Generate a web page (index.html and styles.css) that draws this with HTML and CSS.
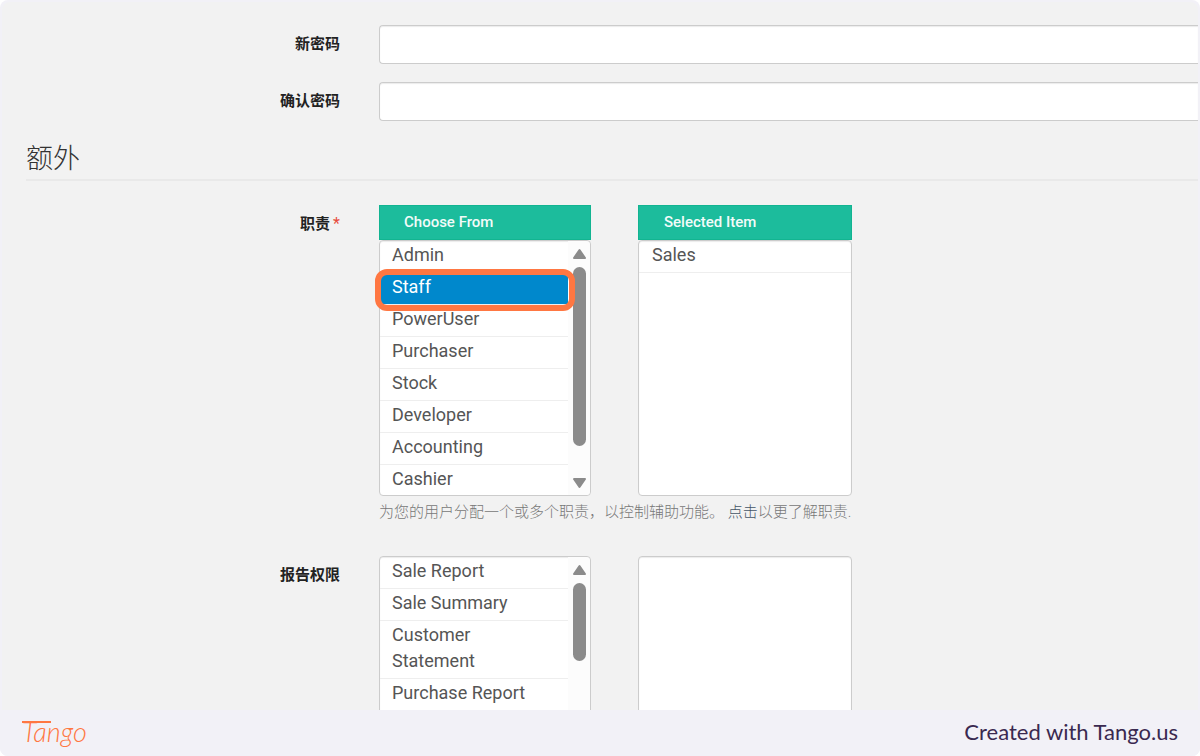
FILE: index.html
```html
<!DOCTYPE html>
<html lang="zh-CN">
<head>
    <meta charset="UTF-8">
    <meta name="viewport" content="width=device-width, initial-scale=1.0">
    <title>额外</title>
    <link rel="stylesheet" href="styles.css">
</head>
<body>
    <div class="page">
        <main class="panel">
            <form class="form">
                <div class="row">
                    <label class="row-label" for="password">新密码</label>
                    <input class="text-input" type="password" id="password">
                </div>
                <div class="row">
                    <label class="row-label" for="confirm">确认密码</label>
                    <input class="text-input" type="password" id="confirm">
                </div>

                <h2 class="section-title">额外</h2>

                <div class="row">
                    <label class="row-label" for="roles">职责<span class="required">*</span></label>
                    <div>
                        <div class="picker">
                            <div class="picker-col">
                                <label class="picker-head" for="roles">Choose From</label>
                                <div class="list-box">
                                    <select class="list" id="roles" multiple>
                                        <option>Admin</option>
                                        <option selected>Staff</option>
                                        <option>PowerUser</option>
                                        <option>Purchaser</option>
                                        <option>Stock</option>
                                        <option>Developer</option>
                                        <option>Accounting</option>
                                        <option>Cashier</option>
                                    </select>
                                    <div class="scrollbar">
                                        <svg class="arrow" viewBox="0 0 15 12"><path d="M7.5 2L13 10H2Z"/></svg>
                                        <span class="thumb"></span>
                                        <svg class="arrow" viewBox="0 0 15 12"><path d="M2 2H13L7.5 10Z"/></svg>
                                    </div>
                                    <div class="highlight"></div>
                                </div>
                            </div>
                            <div class="picker-col picker-selected">
                                <label class="picker-head" for="roles-selected">Selected Item</label>
                                <div class="list-box">
                                    <select class="list" id="roles-selected" multiple>
                                        <option>Sales</option>
                                    </select>
                                </div>
                            </div>
                        </div>
                        <p class="help">为您的用户分配一个或多个职责，以控制辅助功能。 <a href="#">点击</a>以更了解职责.</p>
                    </div>
                </div>

                <div class="row">
                    <label class="row-label" for="reports">报告权限</label>
                    <div class="picker">
                        <div class="picker-col">
                            <div class="list-box">
                                <select class="list" id="reports" multiple>
                                    <option>Sale Report</option>
                                    <option>Sale Summary</option>
                                    <option>Customer Statement</option>
                                    <option>Purchase Report</option>
                                </select>
                                <div class="scrollbar">
                                    <svg class="arrow" viewBox="0 0 15 12"><path d="M7.5 2L13 10H2Z"/></svg>
                                    <span class="thumb thumb-short"></span>
                                    <svg class="arrow" viewBox="0 0 15 12"><path d="M2 2H13L7.5 10Z"/></svg>
                                </div>
                            </div>
                        </div>
                        <div class="picker-col picker-selected">
                            <div class="list-box">
                                <select class="list" id="reports-selected" multiple></select>
                            </div>
                        </div>
                    </div>
                </div>
            </form>
        </main>

        <footer class="footer">
            <span class="logo">Tango</span>
            <span class="credit">Created with Tango.us</span>
        </footer>
    </div>
</body>
</html>
```

FILE: styles.css
```css
* {
    box-sizing: border-box;
}
body {
    margin: 0;
    background: white;
    font-family: Roboto, "Noto Sans CJK SC", sans-serif;
    color: #555;
}
.page {
    display: flex;
    flex-direction: column;
    height: 100vh;
    background: #f2f1f7;
    border-radius: 8px;
    overflow: hidden;
}
.panel {
    flex: 1;
    min-height: 0;
    margin: 2px 2px 0;
    background: #f2f2f2;
    border-radius: 8px 8px 0 0;
    overflow: hidden;
}
.form {
    padding: 23px 0 0 24px;
}
.row {
    display: grid;
    grid-template-columns: 314px 1fr;
    column-gap: 39px;
    margin-bottom: 18px;
}
.row-label {
    padding-top: 8px;
    font-size: 15px;
    line-height: 22px;
    font-weight: bold;
    color: #222;
    text-align: right;
}
.required {
    margin-left: 3px;
    font-size: 16px;
    font-weight: normal;
    color: #e74c3c;
}
.text-input {
    width: 100%;
    height: 39px;
    padding: 4px 12px;
    border: 1px solid #ccc;
    border-right: none;
    border-radius: 4px 0 0 4px;
    background: white;
    box-shadow: inset 0 1px 1px rgba(0,0,0,0.08);
    font-size: 18px;
}
.section-title {
    margin: 0 0 24px;
    padding-bottom: 5px;
    border-bottom: 2px solid #e9e9e9;
    font-family: "Noto Sans CJK SC", sans-serif;
    font-size: 27px;
    line-height: 35px;
    font-weight: 300;
    color: #333;
}
.picker {
    display: flex;
    gap: 47px;
}
.picker-col {
    width: 212px;
}
.picker-selected {
    width: 214px;
}
.picker-head {
    display: block;
    padding-left: 24px;
    background: #1cbc9c;
    border: 1px solid #12b491;
    font-size: 15px;
    line-height: 33px;
    font-weight: 500;
    color: #f2fbf9;
}
.list-box {
    position: relative;
    display: flex;
    height: 256px;
    border: 1px solid #ccc;
    border-radius: 4px;
    background: white;
    box-shadow: inset 0 1px 1px rgba(0,0,0,0.08);
}
.list {
    flex: 1;
    min-width: 0;
    height: 254px;
    padding: 0;
    border: none;
    outline: none;
    background: transparent;
    overflow: hidden;
    font-family: Roboto, sans-serif;
    font-size: 18px;
    color: #555;
}
.list option {
    min-height: 32px;
    padding: 2px 12px 3px;
    border-bottom: 1px solid #eee;
    white-space: normal;
}
/* options ignore line-height, so struts hold the lines 26px high */
.list option::before,
.list option::after {
    content: "";
    display: inline-block;
    height: 26px;
    vertical-align: middle;
}
.list option:checked {
    background: #08c linear-gradient(#08c, #08c);
    -webkit-text-fill-color: white;
}
.picker-selected .picker-head {
    padding-left: 25px;
}
.picker-selected option {
    padding-left: 13px;
}
.scrollbar {
    display: flex;
    flex-direction: column;
    align-items: center;
    width: 22px;
    padding: 7px 0 6px;
    border-radius: 0 4px 4px 0;
    background: #fcfcfc;
}
.arrow {
    width: 15px;
    height: 12px;
    fill: #8b8b8b;
    stroke: #8b8b8b;
    stroke-width: 2;
    stroke-linejoin: round;
}
.thumb {
    width: 13px;
    height: 179px;
    margin: 7px 0 auto;
    border-radius: 7px;
    background: #8b8b8b;
}
.thumb-short {
    height: 78px;
}
/* ring round the option to pick */
.highlight {
    position: absolute;
    top: 28px;
    left: -5px;
    width: 200px;
    height: 42px;
    border: 6px solid #ff7742;
    border-radius: 12px;
    pointer-events: none;
}
.help {
    margin: 5px 0 15px;
    font-size: 15px;
    line-height: 22px;
    font-weight: 300;
    color: #777;
}
.help a {
    color: #456;
    text-decoration: none;
}
.footer {
    display: flex;
    align-items: center;
    justify-content: space-between;
    height: 46px;
    padding: 0 22px 3px;
    background: #f2f1f7;
}
.logo {
    position: relative;
    font-family: Lato, sans-serif;
    font-size: 27px;
    font-style: italic;
    font-weight: 300;
    color: #ff7742;
}
.logo::before {
    content: "";
    position: absolute;
    top: 6px;
    left: 0;
    width: 29px;
    height: 2px;
    background: #ff7742;
}
.credit {
    font-family: Lato, sans-serif;
    font-size: 22px;
    color: #3a2950;
}
```
